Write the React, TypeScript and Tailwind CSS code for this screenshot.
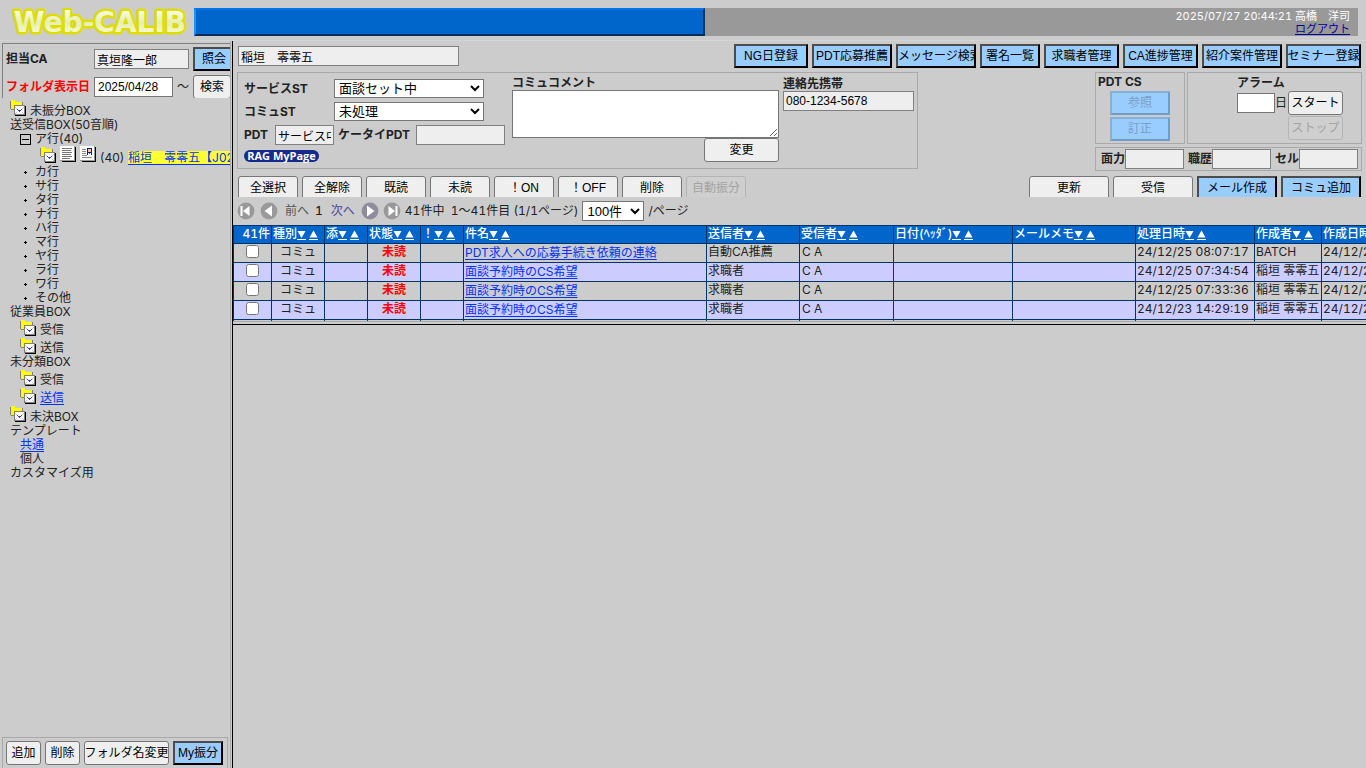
import React from "react";

const ui = "font-['Liberation_Sans','Noto_Sans_CJK_JP',sans-serif]";
const plainButton = `${ui} h-6 shrink-0 overflow-hidden whitespace-nowrap rounded-[3px] border border-[#767676] bg-[#efefef] text-xs text-black disabled:border-[#b4b4b4] disabled:bg-[#cfcfcf] disabled:text-[#a3a3a3] flex items-center justify-center`;
const blueButton = `${ui} h-6 shrink-0 overflow-hidden whitespace-nowrap border-2 border-t-[#4c4c4c] border-l-[#4c4c4c] border-r-black border-b-black bg-[#99ccff] text-xs text-black disabled:border-t-[#86b0da] disabled:border-l-[#86b0da] disabled:border-r-[#6f9cc9] disabled:border-b-[#6f9cc9] disabled:text-[#7a9fc4] flex items-center justify-center`;
const field = `${ui} h-5 shrink-0 border border-[#767676] bg-white px-[3px] text-xs text-black rounded-none`;
const roField = `${ui} h-5 shrink-0 border border-[#808080] bg-[#eeeeee] px-[2px] text-xs text-black rounded-none`;
const selectBox = `${ui} shrink-0 border border-[#767676] bg-white text-[13px] text-black rounded-none`;

function BoxIcon() {
  return (
    <svg width="16" height="17" viewBox="0 0 16 17" shapeRendering="crispEdges" className="shrink-0" aria-hidden="true">
      <path d="M0 2h1v8H0zM1 10h3v1H1zM12 3h1v3h-1z" fill="#808080" />
      <path d="M1 1h4v2h7v7H1z" fill="#ffff00" />
      <path d="M5 7h11v10H5z" fill="#000" />
      <path d="M4 6h11v10H4z" fill="#808080" />
      <path d="M5 7h9v8H5z" fill="#fff" />
      <path d="M5 8h1v1H5zM6 9h1v1H6zM13 8h1v1h-1zM12 9h1v1h-1zM5 14h1v1H5zM6 13h1v1H6zM13 14h1v1h-1zM12 13h1v1h-1z" fill="#c4c4c4" />
      <path d="M7 10h1v1H7zM8 11h1v1H8zM9 12h1v1H9zM10 11h1v1h-1zM11 10h1v1h-1zM9 11h1v1H9z" fill="#3333ff" />
    </svg>
  );
}

function DocIcon({ profile = false }: { profile?: boolean }) {
  return (
    <svg width="16" height="16" viewBox="0 0 16 16" shapeRendering="crispEdges" className="shrink-0" aria-hidden="true">
      <path d="M2 1h14v15H2z" fill="#000" />
      <path d="M0 0h14v14H0z" fill="#fff" />
      <path d="M14 0h1v15H0v-1h14z" fill="#999" />
      {profile ? (
        <>
          <path d="M2 3h4v1H2zM2 5h4v1H2zM2 7h4v1H2zM2 9h5v1H2zM2 11h10v1H2z" fill="#888" />
          <path d="M7 2h5v7H7z" fill="#001aa0" />
          <path d="M8 3h3v3H8z" fill="#f5c49a" />
          <path d="M8 7h3v2H8z" fill="#fff" />
          <path d="M9 7h1v1H9z" fill="#e33" />
        </>
      ) : (
        <path d="M2 2h10v1H2zM2 4h9v1H2zM2 6h10v1H2zM2 8h9v1H2zM2 10h10v1H2zM2 12h8v1H2z" fill="#777" />
      )}
    </svg>
  );
}

function PagerIcon({ kind }: { kind: "first" | "prev" | "next" | "last" }) {
  const flip = kind === "next" || kind === "last";
  const end = kind === "first" || kind === "last";
  return (
    <svg width="18" height="18" viewBox="0 0 18 18" aria-hidden="true">
      <circle cx="9" cy="9" r="8.400" fill={kind === "next" ? "#8f8c9c" : "#999"} />
      <g transform={flip ? "translate(18 0) scale(-1 1)" : undefined} fill="#fff">
        <path d={end ? "M12.5 4v10L6 9z" : "M12 3.5v11L4.5 9z"} />
        {end && <path d="M3.5 4h2v10h-2z" />}
      </g>
    </svg>
  );
}

function PlainRow({ children, pad = "pl-[10px]" }: { children: React.ReactNode; pad?: string }) {
  return <li className={`flex h-[14px] items-center whitespace-nowrap ${pad}`}>{children}</li>;
}

function IconRow({ children, pad = "pl-5", tall = false }: { children: React.ReactNode; pad?: string; tall?: boolean }) {
  return (
    <li className={`flex items-start gap-1 whitespace-nowrap ${tall ? "h-[19px]" : "h-[18px]"} ${pad}`}>
      <BoxIcon />
      <span className="self-end">{children}</span>
    </li>
  );
}

const kanaRows = ["カ行", "サ行", "タ行", "ナ行", "ハ行", "マ行", "ヤ行", "ラ行", "ワ行", "その他"];

function Sidebar() {
  return (
    <aside className="flex w-[230px] shrink-0 flex-col overflow-hidden">
      <div className="ml-[2px] mt-[2px] h-[55px] overflow-hidden border-l border-t border-[#808080] pl-[3px] pt-[3px] text-xs font-bold">
        <div className="flex items-center">
          <label htmlFor="ca" className="w-[88px] shrink-0">担当CA</label>
          <input id="ca" readOnly defaultValue="真垣隆一郎" className={`${roField} w-[95px] font-normal`} />
          <button className={`${blueButton} ml-1 w-[42px] font-normal`}>照会</button>
        </div>
        <div className="mt-1 flex items-center">
          <label htmlFor="from" className="w-[88px] shrink-0 whitespace-nowrap text-[#ff0000]">フォルダ表示日</label>
          <input id="from" defaultValue="2025/04/28" className={`${field} w-[79px] font-normal`} />
          <span className="w-5 shrink-0 text-center font-normal">～</span>
          <button className={`${plainButton} w-[38px] font-normal`}>検索</button>
        </div>
      </div>
      <ul className="flex-1 overflow-hidden pt-px text-xs leading-[14px]">
        <IconRow pad="pl-[10px]" tall>未振分BOX</IconRow>
        <PlainRow>送受信BOX(50音順)</PlainRow>
        <PlainRow pad="pl-5">
          <svg width="11" height="11" viewBox="0 0 11 11" shapeRendering="crispEdges" className="mr-1 shrink-0" aria-hidden="true">
            <path d="M.5.5h10v10H.5zM2 5.5h7" fill="none" stroke="#000" />
          </svg>
          ア行(40)
        </PlainRow>
        <li className="flex h-[19px] items-start gap-1 whitespace-nowrap pl-10">
          <BoxIcon />
          <DocIcon />
          <DocIcon profile />
          <span className="self-end">(40)</span>
          <a href="#inagaki" className="self-end bg-[#ffff33] text-[#0033ff] underline underline-offset-2">稲垣　零零五【J0200005】</a>
        </li>
        {kanaRows.map((row) => (
          <PlainRow key={row} pad="pl-6">
            <svg width="3" height="3" viewBox="0 0 3 3" shapeRendering="crispEdges" className="mr-2 shrink-0" aria-hidden="true">
              <path d="M1 0h1v3H1zM0 1h3v1H0z" />
            </svg>
            {row}
          </PlainRow>
        ))}
        <PlainRow>従業員BOX</PlainRow>
        <IconRow>受信</IconRow>
        <IconRow>送信</IconRow>
        <PlainRow>未分類BOX</PlainRow>
        <IconRow>受信</IconRow>
        <IconRow><a href="#sent" className="text-[#0033ff] underline underline-offset-2">送信</a></IconRow>
        <IconRow pad="pl-[10px]" tall>未決BOX</IconRow>
        <PlainRow>テンプレート</PlainRow>
        <PlainRow pad="pl-5"><a href="#common" className="text-[#0033ff] underline underline-offset-2">共通</a></PlainRow>
        <PlainRow pad="pl-5">個人</PlainRow>
        <PlainRow>カスタマイズ用</PlainRow>
      </ul>
      <div className="ml-[2px] mr-[2px] flex gap-1 border border-b-0 border-[#a9a9a9] pb-[3px] pl-[3px] pt-[3px]">
        <button className={`${plainButton} w-[35px]`}>追加</button>
        <button className={`${plainButton} w-[35px]`}>削除</button>
        <button className={`${plainButton} w-[85px]`}>フォルダ名変更</button>
        <button className={`${blueButton} w-[50px]`}>My振分</button>
      </div>
    </aside>
  );
}

const topButtons: [string, string][] = [
  ["NG日登録", "w-[74px]"],
  ["PDT応募推薦", "w-20"],
  ["メッセージ検索", "w-20"],
  ["署名一覧", "w-[60px]"],
  ["求職者管理", "w-[75px]"],
  ["CA進捗管理", "w-[75px]"],
  ["紹介案件管理", "w-20"],
  ["セミナー登録", "w-[75px]"],
];

function ControlPane() {
  return (
    <section className="h-[156px] shrink-0 overflow-hidden pl-[4px] pr-[4px] pt-[3px] text-xs">
      <div className="flex h-6 items-center justify-between">
        <input aria-label="氏名" readOnly defaultValue="稲垣　零零五" className={`${roField} ml-px w-[221px]`} />
        <div className="flex gap-1 pr-px">
          {topButtons.map(([label, width]) => (
            <button key={label} className={`${blueButton} ${width} ${label === "メッセージ検索" ? "!justify-start" : ""}`}>{label}</button>
          ))}
        </div>
      </div>
      <div className="mt-1 flex items-start justify-between">
        <div className="flex h-[97px] w-[681px] border border-[#a9a9a9] font-bold">
          <div className="flex w-[274px] flex-col pl-[6px] pt-[6px]">
            <div className="flex h-[23px] items-start">
              <label htmlFor="svc" className="w-[90px] leading-5">サービスST</label>
              <select id="svc" className={`${selectBox} h-[19px] w-[150px] font-normal`}><option>面談セット中</option></select>
            </div>
            <div className="flex h-[23px] items-start">
              <label htmlFor="com" className="w-[90px] leading-5">コミュST</label>
              <select id="com" className={`${selectBox} h-[19px] w-[150px] font-normal`}><option>未処理</option></select>
            </div>
            <div className="flex h-[25px] items-start whitespace-nowrap">
              <label htmlFor="pdt" className="w-[31px] shrink-0 leading-5">PDT</label>
              <input id="pdt" readOnly defaultValue="サービス中" className={`${roField} w-[59px] font-normal`} />
              <label htmlFor="kpdt" className="ml-1 w-[78px] shrink-0 leading-5">ケータイPDT</label>
              <input id="kpdt" readOnly className={`${roField} w-[89px]`} />
            </div>
            <a href="#mypage" className="flex h-3 w-[75px] items-center justify-center whitespace-nowrap rounded-full bg-[#142b8c] font-['Open_Sans',sans-serif] text-[11px] leading-3 text-white">RAG MyPage</a>
          </div>
          <div className="flex w-[267px] flex-col pt-[3px]">
            <label htmlFor="memo" className="leading-[14px]">コミュコメント</label>
            <textarea id="memo" className="h-12 w-full resize border border-[#767676] bg-white font-normal" />
            <button className={`${plainButton} w-[75px] self-end font-normal`}>変更</button>
          </div>
          <div className="ml-1 flex w-[131px] flex-col pt-[3px]">
            <label htmlFor="tel" className="leading-[15px]">連絡先携帯</label>
            <input id="tel" readOnly defaultValue="080-1234-5678" className={`${roField} font-normal`} />
          </div>
        </div>
        <div className="w-[267px] font-bold">
          <div className="flex gap-[2px]">
            <div className="flex h-[72px] w-[90px] flex-col items-center gap-[2px] border border-[#a9a9a9]">
              <span className="h-4 self-start pl-[2px] leading-[18px]">PDT CS</span>
              <button disabled className={`${blueButton} w-[60px] font-normal`}>参照</button>
              <button disabled className={`${blueButton} w-[60px] font-normal`}>訂正</button>
            </div>
            <div className="h-[72px] flex-1 border border-[#a9a9a9] pl-[49px]">
              <label htmlFor="alarm" className="block h-[18px] leading-5">アラーム</label>
              <div className="flex w-[106px] flex-wrap items-center justify-end gap-y-px font-normal">
                <input id="alarm" className={`${field} w-[38px]`} />
                <span className="w-[13px] whitespace-nowrap">日</span>
                <button className={`${plainButton} w-[55px]`}>スタート</button>
                <button disabled className={`${plainButton} w-[55px]`}>ストップ</button>
              </div>
            </div>
          </div>
          <div className="mt-[3px] flex h-6 items-center gap-1 border border-[#a9a9a9] pl-[5px]">
            {["面力", "職歴", "セル"].map((name) => (
              <label key={name} className="flex items-center whitespace-nowrap">
                {name}
                <input readOnly className={`${roField} w-[59px]`} />
              </label>
            ))}
          </div>
        </div>
      </div>
      <div className="mt-[5px] flex justify-between">
        <div className="ml-px flex gap-1">
          {["全選択", "全解除", "既読", "未読", "！ON", "！OFF", "削除"].map((label) => (
            <button key={label} className={`${plainButton} w-[60px]`}>{label}</button>
          ))}
          <button disabled className={`${plainButton} w-[60px]`}>自動振分</button>
        </div>
        <div className="flex gap-1 pr-px">
          <button className={`${plainButton} w-20`}>更新</button>
          <button className={`${plainButton} w-20`}>受信</button>
          <button className={`${blueButton} w-20`}>メール作成</button>
          <button className={`${blueButton} w-20`}>コミュ追加</button>
        </div>
      </div>
    </section>
  );
}

function Pager() {
  return (
    <nav className="flex h-7 shrink-0 items-center whitespace-nowrap pl-1 text-xs tabular-nums">
      <a href="#first" aria-label="最初" className="mr-[5px]"><PagerIcon kind="first" /></a>
      <a href="#prev" aria-label="前" className="mr-[7px]"><PagerIcon kind="prev" /></a>
      <span className="mr-[6px] text-[#555]">前へ</span>
      <b className="mr-2 font-medium">1</b>
      <a href="#next" className="mr-1 flex items-center gap-[6px] text-[#4a489c]">次へ<PagerIcon kind="next" /></a>
      <a href="#last" aria-label="最後" className="mr-1"><PagerIcon kind="last" /></a>
      <span>41件中&nbsp; 1～41件目 (1/1ページ)</span>
      <select aria-label="表示件数" className={`${selectBox} mx-1 h-5 w-[62px]`}><option>100件</option></select>
      <span>/ページ</span>
    </nav>
  );
}

const columns: [string, string][] = [
  ["種別", "w-[53px]"],
  ["添", "w-[43px]"],
  ["状態", "w-[53px]"],
  ["！", "w-[43px]"],
  ["件名", "w-[243px]"],
  ["送信者", "w-[93px]"],
  ["受信者", "w-[94px]"],
  ["日付(ﾍｯﾀﾞ)", "w-[119px]"],
  ["メールメモ", "w-[123px]"],
  ["処理日時", "w-[119px]"],
  ["作成者", "w-[67px]"],
  ["作成日時", "w-[119px]"],
];

const mails = [
  { subject: "PDT求人への応募手続き依頼の連絡", from: "自動CA推薦", at: "24/12/25 08:07:17", by: "BATCH" },
  { subject: "面談予約時のCS希望", from: "求職者", at: "24/12/25 07:34:54", by: "稲垣 零零五" },
  { subject: "面談予約時のCS希望", from: "求職者", at: "24/12/25 07:33:36", by: "稲垣 零零五" },
  { subject: "面談予約時のCS希望", from: "求職者", at: "24/12/23 14:29:19", by: "稲垣 零零五" },
];

function SortMark({ down = false, name }: { down?: boolean; name: string }) {
  return (
    <a href="#sort" aria-label={`${name} ${down ? "降順" : "昇順"}`} className={down ? "mr-[3px]" : ""}>
      <svg width="9" height="10" viewBox="0 0 9 10" className="inline-block align-[-2px]" aria-hidden="true">
        <path d={down ? "M.5 1h8L4.5 8z" : "M.5 7.5h8L4.500 .5z"} fill="#fff" />
        <path d="M0 9h9v1H0z" fill="#fff" />
      </svg>
    </a>
  );
}

function MailTable() {
  const cell = "overflow-hidden whitespace-nowrap border border-[#003366] px-px py-0 align-top leading-4";
  return (
    <div className="h-24 shrink-0 overflow-hidden">
      <table className="w-[1208px] table-fixed border-collapse text-xs tabular-nums">
        <thead>
          <tr className="h-[18px] bg-[#0066cc] text-left text-white">
            <th className={`${cell} w-[38px] text-right font-medium`}>41件</th>
            {columns.map(([name, width]) => (
              <th key={name} className={`${cell} ${width} font-medium`}>
                {name}
                <SortMark down name={name} />
                <SortMark name={name} />
              </th>
            ))}
          </tr>
        </thead>
        <tbody>
          {mails.map((m, i) => (
            <tr key={m.at} className={`h-[19px] ${i % 2 ? "bg-[#ccccff]" : "bg-[#cccccc]"}`}>
              <td className={`${cell} text-center`}>
                <input type="checkbox" aria-label={`${m.subject} ${m.at}`} className="mx-auto mt-px block size-[13px]" />
              </td>
              <td className={`${cell} text-center`}>コミュ</td>
              <td className={cell} />
              <td className={`${cell} text-center font-bold text-[#ff0000]`}>未読</td>
              <td className={cell} />
              <td className={cell}>
                <a href="#mail" className="block leading-[18px] text-[#0033ff] underline underline-offset-2">{m.subject}</a>
              </td>
              <td className={cell}>{m.from}</td>
              <td className={`${cell} pl-[2px]`}>C A</td>
              <td className={cell} />
              <td className={cell} />
              <td className={cell}>{m.at}</td>
              <td className={cell}>{m.by}</td>
              <td className={cell}>{m.at}</td>
            </tr>
          ))}
          <tr className="h-[19px]">
            <td className={cell} />
            {columns.map(([name]) => (
              <td key={name} className={cell} />
            ))}
          </tr>
        </tbody>
      </table>
    </div>
  );
}

export default function App() {
  return (
    <div className="flex h-screen flex-col overflow-hidden bg-[#cccccc] font-['Inter','Noto_Sans_CJK_JP',sans-serif] text-[#222]">
      <header className="flex h-10 shrink-0 pb-1 pl-2 pr-2 pt-2">
        <svg width="186" height="28" viewBox="0 0 186 28" className="shrink-0" role="img" aria-label="Web-CALIB">
          <defs>
            <linearGradient id="shine" x1="0" y1="0" x2="0" y2="1">
              <stop offset="0" stopColor="#fff" />
              <stop offset=".5" stopColor="#e7efb0" />
              <stop offset="1" stopColor="#ffffe0" />
            </linearGradient>
          </defs>
          <text x="92" y="24" textAnchor="middle" fontFamily="DejaVu Sans" fontWeight="700" fontSize="28" fill="url(#shine)" stroke="#dddd00" strokeWidth="5" strokeLinejoin="round" paintOrder="stroke">Web-CALIB</text>
        </svg>
        <div className="w-[511px] shrink-0 border-2 border-b-[#002c58] border-l-[#1a90ff] border-r-[#00346a] border-t-[#0074e8] bg-[#0066cc]" />
        <div className="flex flex-1 flex-col items-end bg-[#999999] pr-2 pt-[2px] text-[11px] leading-[13px] text-white tabular-nums">
          <span>2025/07/27 20:44:21 高橋　洋司</span>
          <a href="#logout" className="text-[#000099] underline">ログアウト</a>
        </div>
      </header>
      <div className="flex min-h-0 flex-1 border-t border-[#d4d4d4]">
        <Sidebar />
        <div className="w-[3px] shrink-0 border-l border-r border-l-[#aaaaaa] border-r-black" />
        <main className="flex min-w-0 flex-1 flex-col">
          <ControlPane />
          <Pager />
          <MailTable />
          <div className="h-1 shrink-0 border-b border-t border-b-black border-t-[#aaaaaa]" />
        </main>
      </div>
    </div>
  );
}
